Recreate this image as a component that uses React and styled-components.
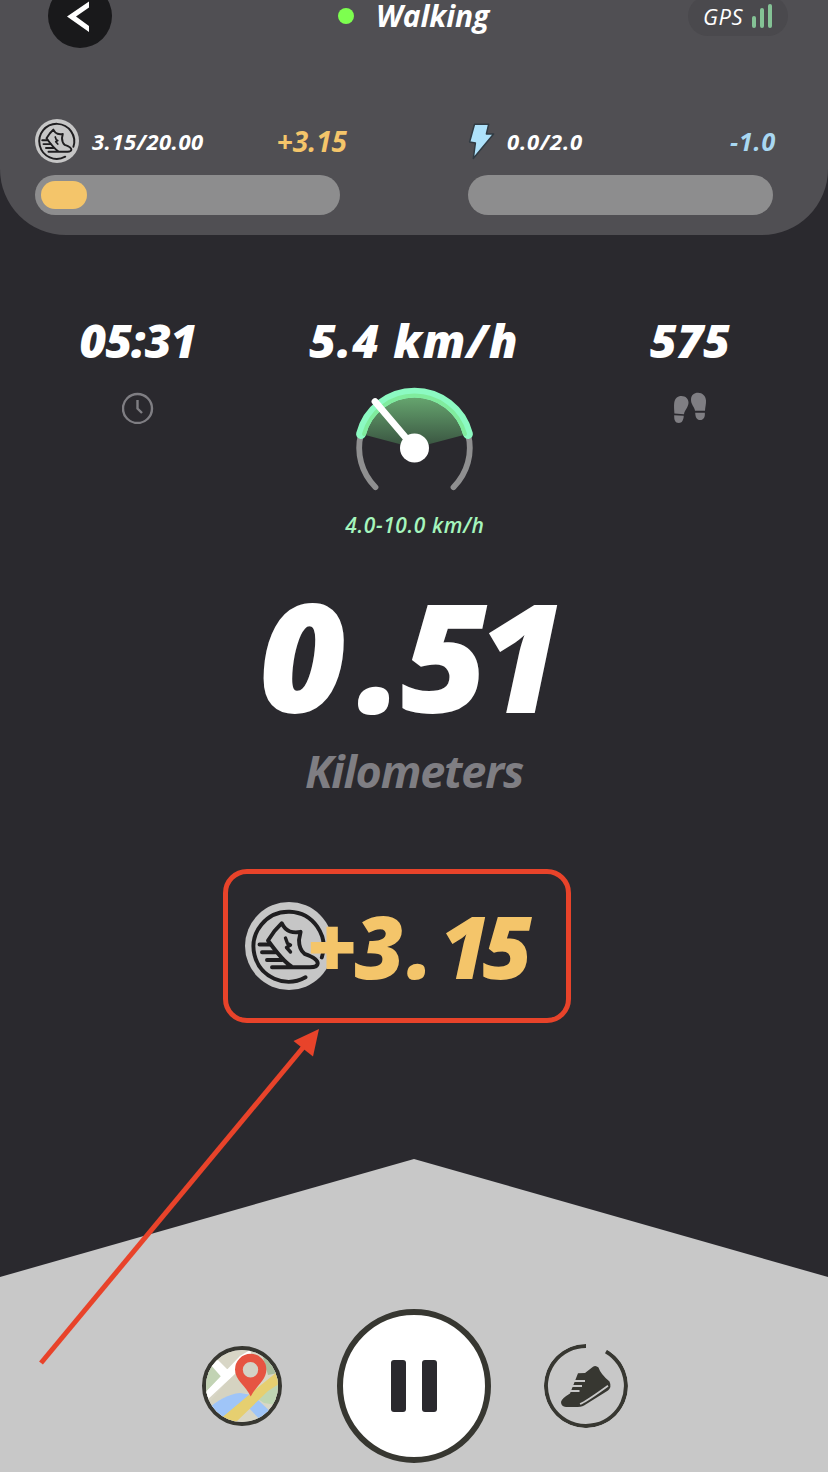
import React from "react";
import styled, { createGlobalStyle } from "styled-components";

const GlobalStyle = createGlobalStyle`
  * {
    box-sizing: border-box;
  }

  body {
    margin: 0;
    background-color: #2a292e;
    font-family: "Open Sans", "Noto Sans", sans-serif;
    font-style: italic;
  }
`;

const Screen = styled.div`
  position: relative;
  display: flex;
  flex-direction: column;
  width: 828px;
  height: 1472px;
  overflow: hidden;
  background-color: #2a292e;
  color: #fff;
`;

const Header = styled.header`
  height: 235px;
  flex-shrink: 0;
  background-color: #504f53;
  border-radius: 0 0 66px 66px;
`;

const TopBar = styled.div`
  display: grid;
  grid-template-columns: 200px 1fr 200px;
  align-items: center;
  height: 64px;
  margin-top: -16px;
  padding: 0 40px 0 48px;
`;

const BackButton = styled.button`
  display: flex;
  align-items: center;
  justify-content: center;
  width: 64px;
  height: 64px;
  padding: 0 4px 0 0;
  border: none;
  border-radius: 50%;
  background-color: #19191b;
`;

const Status = styled.div`
  display: flex;
  align-items: center;
  gap: 22px;
  padding-left: 90px;
  white-space: nowrap;
`;

const Dot = styled.span`
  width: 16px;
  height: 16px;
  border-radius: 50%;
  background-color: #7dff4f;
`;

const Gps = styled.div`
  display: flex;
  align-items: center;
  justify-self: end;
  gap: 9px;
  width: 100px;
  height: 40px;
  padding-left: 15px;
  border-radius: 20px;
  background-color: #4a494d;
`;

const SignalBars = styled.div`
  display: flex;
  align-items: flex-end;
  gap: 4px;
`;

const SignalBar = styled.span`
  width: 4px;
  height: ${(props) => props.$height}px;
  border-radius: 2px;
  background-color: #84c295;
`;

const Label = styled.span`
  display: block;
  color: ${(props) => props.$color || "#fff"};
  font-size: ${(props) => props.$size}px;
  font-weight: ${(props) => props.$weight || 700};
  line-height: ${(props) => props.$line || 40}px;
  letter-spacing: ${(props) => props.$spacing || 0}px;
  white-space: nowrap;
`;

const Balances = styled.div`
  display: flex;
  gap: 128px;
  padding: 71px 0 0 35px;
`;

const Balance = styled.div`
  width: 305px;
`;

const BalanceInfo = styled.div`
  display: flex;
  align-items: center;
  height: 44px;
  margin-bottom: 12px;
  margin-right: ${(props) => props.$overhang}px;
`;

const BalanceIcon = styled.div`
  display: flex;
  width: ${(props) => props.$width}px;
  margin-right: 13px;

  svg {
    flex-shrink: 0;
  }
`;

const Gain = styled(Label)`
  margin-left: auto;
`;

const Track = styled.div`
  height: 40px;
  padding: 6px;
  border-radius: 20px;
  background-color: #8d8d8e;
`;

const Fill = styled.div`
  height: 28px;
  border-radius: 14px;
  background-color: #f4c56a;
`;

const Metrics = styled.section`
  display: grid;
  grid-template-columns: repeat(3, 276px);
  height: 345px;
  padding-top: 75px;
`;

const Metric = styled.div`
  display: flex;
  flex-direction: column;
  align-items: center;
  gap: ${(props) => props.$gap}px;
`;

const SpeedRange = styled(Label)`
  margin: -16px 0 0 2px;
`;

const Distance = styled.section`
  display: flex;
  flex-direction: column;
  align-items: center;
  gap: 11px;
`;

const Amount = styled(Label)`
  margin-right: 4px;
`;

const Reward = styled.section`
  display: flex;
  align-items: center;
  width: 348px;
  height: 154px;
  margin: 68px 0 0 223px;
  padding-left: 17px;
  border: 5px solid #e8432a;
  border-radius: 24px;
`;

const RewardAmount = styled(Label)`
  margin-left: -26px;
  z-index: 1;
`;

// the big numbers are kerned by hand, digit by digit
const Digit = styled.span`
  margin: 0 ${(props) => props.$after || 0}px 0 ${(props) => props.$before || 0}px;
`;

const Footer = styled.footer`
  display: flex;
  align-items: center;
  justify-content: center;
  gap: 53px;
  height: 313px;
  margin-top: auto;
  padding: 141px 0 0 2px;
  background-color: #c8c8c8;
  clip-path: polygon(0 118px, 50% 0, 100% 118px, 100% 100%, 0 100%);
`;

const RoundButton = styled.button`
  display: flex;
  align-items: center;
  justify-content: center;
  flex-shrink: 0;
  width: ${(props) => props.$size}px;
  height: ${(props) => props.$size}px;
  padding: 0;
  border: ${(props) => props.$border}px solid #373731;
  border-radius: 50%;
  background-color: ${(props) => props.$fill || "transparent"};
  overflow: hidden;
`;

const MapButton = styled(RoundButton)`
  margin-right: 2px;
`;

const PauseBars = styled.div`
  display: flex;
  gap: 16px;
`;

const PauseBar = styled.span`
  width: 15px;
  height: 52px;
  border-radius: 3px;
  background-color: #2a292e;
`;

const Pointer = styled.svg`
  position: absolute;
  left: 30px;
  top: 1020px;
  z-index: 2;
`;

const CoinIcon = ({ size }) => (
  <svg width={size} height={size} viewBox="0 0 88 88" fill="none" stroke="#1f1e20" strokeWidth="3.9" strokeLinecap="round" strokeLinejoin="round">
    <circle cx="44" cy="44" r="44" fill="#c6c6c6" stroke="none" />
    <path d="M76.8 55.5A35 35 0 1 0 60.5 75.3" />
    <path d="M46.5 64.5C39 60 32 51 23 38.5L29.5 29L36.7 21.2Q40 28 45 29.5Q50 31 55.6 29.8L54 38C54 45 56 49 59.5 51.8C66 54 73 57 72.7 61.5C72.5 64.5 69 65.3 65 65.3L27 65.3" />
    <path d="M14.5 42.5H25M17 50.2H31M22 58H37" />
    <path d="M40.5 36L42.5 41.5L45.5 43L41.5 45.5L45.5 50" strokeWidth="3.4" />
  </svg>
);

const BoltIcon = () => (
  <svg width="28" height="40" viewBox="0 0 28 40">
    <path d="M6.5 3.2H20.7L18.4 13H25.6L5.3 37.5L7.4 22L1.6 21Z" fill="#aee2fb" stroke="#313b43" strokeWidth="1.5" strokeLinejoin="round" />
  </svg>
);

const BackIcon = () => (
  <svg width="22" height="31" viewBox="0 0 22 31">
    <path d="M0 15.5L22 0.5V6.5L9 15.5L22 25V31Z" fill="#fff" />
  </svg>
);

const ClockIcon = () => (
  <svg width="32" height="32" viewBox="0 0 32 32" fill="none" stroke="#7f7e83" strokeWidth="2.4">
    <circle cx="15.5" cy="16.5" r="14.5" />
    <path d="M15.5 8V16.5L20 21" />
  </svg>
);

const StepsIcon = () => (
  <svg width="34" height="32" viewBox="0 0 34 32" fill="#7f7e83">
    <path d="M1.4 21.5C1.2 17 .8 14.5 1.2 11C1.8 6.5 4.5 4 8.5 4C12.5 4 15.8 6.8 15.5 11C15 16 11.5 18.5 11 22.2Z" />
    <path d="M1.2 23.3L10.8 23.8C10.4 28.5 9 31 5.8 31C2 31 1 28 1.2 23.3Z" />
    <path d="M22 18.8C21.5 14.5 17.7 12.5 18 7.2C18.2 3 21 .8 25 .8C29.5 .8 32.7 4 33 8.5C33.2 12 32.2 15 32 18.8Z" />
    <path d="M22.2 20.7H31.8C32.3 25 30.5 28 27.2 28C23.5 28 22.4 25 22.2 20.7Z" />
  </svg>
);

const Speedometer = () => (
  <svg width="124" height="124" viewBox="-62.5 -62 124 124" fill="none" strokeLinecap="round">
    <defs>
      <linearGradient id="sector" x1="0" y1="0" x2="0" y2="1">
        <stop offset="0" stopColor="#69ab72" />
        <stop offset="1" stopColor="#38513f" />
      </linearGradient>
    </defs>
    <path d="M0 0L-53 -14A55 55 0 0 1 53 -14Z" fill="url(#sector)" />
    <path d="M-53.5 -14A55.3 55.3 0 0 0 -39 39.2M53.5 -14A55.3 55.3 0 0 1 39 39.2" stroke="#8f8f90" strokeWidth="5.8" />
    <path d="M-53.5 -14A55.3 55.3 0 0 1 53.5 -14" stroke="#8cfac2" strokeWidth="9.8" />
    <path d="M-50.5 -14A52.4 52.4 0 0 1 50.5 -14" stroke="#80ec9d" strokeWidth="4" />
    <path d="M0 0L-39.5 -46.5" stroke="#fff" strokeWidth="6.8" />
    <circle r="14.5" fill="#fff" />
  </svg>
);

const MapIcon = () => (
  <svg width="72" height="72" viewBox="4 4 72 72">
    <rect width="80" height="80" fill="#d8d6c6" />
    <path d="M0 22L15 20L25 29L4 49H0Z" fill="#c2d3b4" />
    <path d="M76 28L80 60L62 57L53 51Z" fill="#bfd6b3" />
    <path d="M60 8L78 14L76 27L66 29Z" fill="#a9bd9d" />
    <path d="M0 50L38 10L48 4L50 10L37 21L9 46L0 60Z" fill="#fff" />
    <path d="M8 18L16 14L25 23H36L34 32L22 34Z" fill="#fff" />
    <path d="M4 60L30 30L37 22L48 32L52 46L38 48C24 49 12 56 6 62Z" fill="#d5d3c1" />
    <path d="M4 55L34 27L29 22L3 47Z" fill="#fff" />
    <path d="M5 64C15 54 27 48 38 47L50 49L25 72Z" fill="#9fc5f8" />
    <path d="M45 60L54 52L73 70L62 78Z" fill="#9fc5f8" />
    <path d="M17 74L54 43L80 22V36L66 45L33 77H19Z" fill="#e6cf70" />
    <path d="M48.7 50.5C44 40 33 34 33 23.5A15.7 15.7 0 0 1 64.4 23.5C64.4 34 54 40 48.7 50.5Z" fill="#e65442" />
    <circle cx="48.5" cy="23.8" r="7.7" fill="#d3d2c6" />
  </svg>
);

const ShoeIcon = () => (
  <svg width="84" height="84" viewBox="0 0 84 84" fill="none">
    <path d="M42 2A40 40 0 1 0 62 7.4" stroke="#373731" strokeWidth="4" />
    <path d="M34 29.2L41 29L49 22.8Q51.5 20.8 54.5 23.5Q56.5 30 65.5 37.5Q68 43 64 46.5L40 61.5Q37 63 31 63H22Q17 62.5 17 58Q17.5 54.5 26 49.5Z" fill="#373731" />
    <path d="M36 60Q41 58.5 64 41.8" stroke="#c8c8c8" strokeWidth="1.8" />
    <path d="M30 37H41M27.5 42H38M25.5 47H35.5" stroke="#c8c8c8" strokeWidth="2" />
  </svg>
);

const App = () => {
  return (
    <>
      <GlobalStyle />
      <Screen>
        <Header>
          <TopBar>
            <BackButton aria-label="Back">
              <BackIcon />
            </BackButton>
            <Status>
              <Dot />
              <Label $size={30} $line={32} $spacing={-0.1}>Walking</Label>
            </Status>
            <Gps>
              <Label $size={22} $weight={400} $line={30} $spacing={0.6}>GPS</Label>
              <SignalBars>
                {[12, 20, 24].map((height) => (
                  <SignalBar key={height} $height={height} />
                ))}
              </SignalBars>
            </Gps>
          </TopBar>
          <Balances>
            <Balance>
              <BalanceInfo $overhang={-7}>
                <BalanceIcon $width={44}>
                  <CoinIcon size={44} />
                </BalanceIcon>
                <Label $size={22} $spacing={0.5}>3.15/20.00</Label>
                <Gain $size={28} $color="#f4c56a">+3.15</Gain>
              </BalanceInfo>
              <Track>
                <Fill style={{ width: `${(3.15 / 20) * 100}%` }} />
              </Track>
            </Balance>
            <Balance>
              <BalanceInfo $overhang={-3}>
                <BalanceIcon $width={26}>
                  <BoltIcon />
                </BalanceIcon>
                <Label $size={22} $spacing={0.8}>0.0/2.0</Label>
                <Gain $size={25} $color="#a9d8f2" $spacing={0.8}>-1.0</Gain>
              </BalanceInfo>
              <Track />
            </Balance>
          </Balances>
        </Header>

        <Metrics>
          <Metric $gap={22}>
            <Label $size={46} $weight={800} $line={60} $spacing={-0.8}>05:31</Label>
            <ClockIcon />
          </Metric>
          <Metric $gap={16}>
            <Label $size={46} $weight={800} $line={60} $spacing={1.1}>5.4 km/h</Label>
            <Speedometer />
            <SpeedRange $size={21} $weight={600} $line={30} $color="#a5f5bd" $spacing={0.6}>4.0-10.0 km/h</SpeedRange>
          </Metric>
          <Metric $gap={22}>
            <Label $size={46} $weight={800} $line={60}>575</Label>
            <StepsIcon />
          </Metric>
        </Metrics>

        <Distance>
          <Amount $size={150} $weight={800} $line={150}>
            0<Digit $before={12} $after={-3}>.</Digit>
            <Digit $after={-10}>5</Digit>1
          </Amount>
          <Label $size={45} $line={60} $color="#7f7e83" $spacing={-1.2}>Kilometers</Label>
        </Distance>

        <Reward>
          <CoinIcon size={88} />
          <RewardAmount $size={86} $weight={800} $line={100} $color="#f4c56a">
            +<Digit $before={-3}>3</Digit>
            <Digit $before={3} $after={6}>.</Digit>
            <Digit $after={-7}>1</Digit>5
          </RewardAmount>
        </Reward>

        <Footer>
          <MapButton $size={80} $border={4} aria-label="Map">
            <MapIcon />
          </MapButton>
          <RoundButton $size={154} $border={6} $fill="#fff" aria-label="Pause">
            <PauseBars>
              <PauseBar />
              <PauseBar />
            </PauseBars>
          </RoundButton>
          <RoundButton $size={84} $border={0} aria-label="Sneaker">
            <ShoeIcon />
          </RoundButton>
        </Footer>

        <Pointer width="300" height="350" viewBox="30 1020 300 350">
          <path d="M41 1363L306 1044" stroke="#e8432a" strokeWidth="5" />
          <path d="M319 1029L293.5 1041L313 1056.5Z" fill="#e8432a" />
        </Pointer>
      </Screen>
    </>
  );
};

export default App;
